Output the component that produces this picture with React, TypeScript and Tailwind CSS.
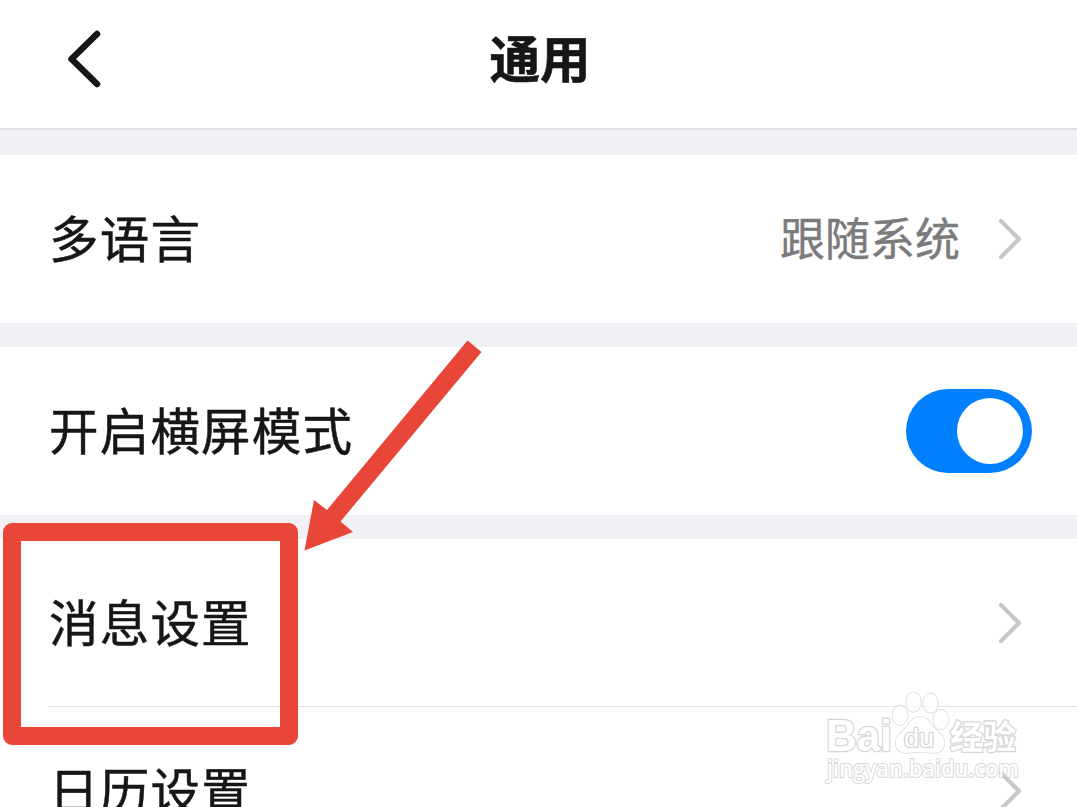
import { useState } from "react";

const FONT = "font-['Noto_Sans_CJK_SC',sans-serif]";

export default function App() {
  const [landscape, setLandscape] = useState(true);

  return (
    <div
      className={`relative h-[807px] w-full overflow-hidden bg-[#f1f0f5] text-[#161616] ${FONT}`}
    >
      <header className="grid h-[130px] grid-cols-[1fr_auto_1fr] items-start border-b-2 border-[#e3e3e3] bg-white">
        <button type="button" aria-label="返回" className="ml-[66px] mt-[29px] w-9">
          <BackIcon />
        </button>
        <h1 className="ml-[3px] mt-[18px] text-[50.5px] font-bold leading-[76px] [-webkit-text-stroke:0.6px_#161616]">
          通用
        </h1>
      </header>

      <main className="flex flex-col gap-6 pt-[25px]">
        <Group>
          <Row label="多语言">
            <span className="mb-[5px] mr-[37px] text-[45px] leading-none text-[#7b7b7b] [-webkit-text-stroke:0.4px_#7b7b7b]">
              跟随系统
            </span>
            <ChevronIcon />
          </Row>
        </Group>

        <Group>
          <Row label="开启横屏模式">
            <Toggle
              checked={landscape}
              onChange={() => setLandscape((value) => !value)}
            />
          </Row>
        </Group>

        <Group>
          <Row label="消息设置">
            <ChevronIcon />
          </Row>
          <div className="-mt-px ml-12 h-px bg-[#e2e2e2]" />
          <Row label="日历设置">
            <ChevronIcon />
          </Row>
        </Group>
      </main>

      <Watermark />
      <Highlight />
    </div>
  );
}

function Group({ children }: { children: React.ReactNode }) {
  return <section className="bg-white">{children}</section>;
}

function Row({
  label,
  children,
}: {
  label: string;
  children: React.ReactNode;
}) {
  return (
    <div className="flex h-[168px] items-center justify-between pl-[49px] pr-[45px]">
      <span className="mb-1 whitespace-nowrap text-[49.5px] leading-[76px] tracking-[1.2px] [-webkit-text-stroke:0.5px_#161616]">
        {label}
      </span>
      <div className="flex items-center">{children}</div>
    </div>
  );
}

function Toggle({
  checked,
  onChange,
}: {
  checked: boolean;
  onChange: () => void;
}) {
  return (
    <button
      type="button"
      role="switch"
      aria-checked={checked}
      onClick={onChange}
      className={`flex h-[84px] w-[126px] items-center rounded-full px-[9px] ${
        checked ? "justify-end bg-[#0080ff]" : "justify-start bg-[#d9d9de]"
      }`}
    >
      <span className="size-[66px] rounded-full bg-white" />
    </button>
  );
}

function BackIcon() {
  return (
    <svg
      viewBox="0 0 36 60"
      fill="none"
      stroke="#161616"
      strokeWidth="6.5"
      strokeLinecap="round"
      strokeLinejoin="round"
      className="h-[60px] w-9"
    >
      <path d="M31 5 5.5 30 31 55" />
    </svg>
  );
}

function ChevronIcon() {
  return (
    <svg
      viewBox="0 0 26 42"
      fill="none"
      stroke="#c8c8c8"
      strokeWidth="4.2"
      strokeLinecap="round"
      strokeLinejoin="round"
      className="mr-[9px] h-[42px] w-[26px]"
    >
      <path d="M4 3 22 21 4 39" />
    </svg>
  );
}

// Red frame and arrow pointing at the message settings row
function Highlight() {
  return (
    <>
      <div className="pointer-events-none absolute left-[3px] top-[523px] h-[222px] w-[295px] rounded-[9px] border-[18px] border-[#e84639]" />
      <svg
        viewBox="0 0 180 212"
        className="pointer-events-none absolute left-[303px] top-[339px] h-[212px] w-[180px]"
      >
        <path
          fill="#e84639"
          d="M164.500 1.500 178.500 13 37.500 182.500 50 193 1.500 211.500 11 161 24 171Z"
        />
      </svg>
    </>
  );
}

function Watermark() {
  return (
    <svg
      viewBox="0 0 210 100"
      fill="#fff"
      stroke="#d2d2d2"
      strokeWidth="1.2"
      strokeLinejoin="round"
      className="pointer-events-none absolute left-[820px] top-[687px] h-[100px] w-[210px] font-['Liberation_Sans',sans-serif] opacity-90 [paint-order:stroke]"
    >
      <text
        x="6"
        y="64"
        fontSize="44"
        fontWeight="700"
        strokeWidth="2.6"
        textLength="66"
        lengthAdjust="spacingAndGlyphs"
      >
        Bai
      </text>
      <g fillOpacity="0.85">
        <ellipse cx="80" cy="28.500" rx="7.800" ry="9.800" />
        <ellipse cx="93.500" cy="15" rx="7.500" ry="10" />
        <ellipse cx="110.500" cy="16" rx="7.500" ry="9.800" />
        <ellipse cx="121" cy="32.500" rx="7.800" ry="9.800" />
        <path d="M100 29.500c-6 0-9 4-12 8.500-4 6-12.500 9-12.500 18 0 6 4 10 11 10 5 0 8.500-1 13.500-1s8.500 1 13.500 1c7 0 11-4 11-10 0-9-8.500-12-12.500-18-3-4.500-6-8.500-12-8.500Z" />
      </g>
      <text
        x="84"
        y="59.500"
        fontSize="26"
        strokeWidth="2.6"
        textLength="30"
        lengthAdjust="spacingAndGlyphs"
      >
        du
      </text>
      <text
        x="130"
        y="62"
        fontSize="33"
        fontWeight="700"
        strokeWidth="2.6"
        className="font-['Noto_Sans_CJK_SC',sans-serif]"
      >
        经验
      </text>
      <text
        x="7"
        y="90"
        fontSize="23.500"
        fontWeight="600"
        strokeWidth="2"
        textLength="192"
        lengthAdjust="spacingAndGlyphs"
        className="font-['Open_Sans',sans-serif]"
      >
        jingyan.baidu.com
      </text>
    </svg>
  );
}
